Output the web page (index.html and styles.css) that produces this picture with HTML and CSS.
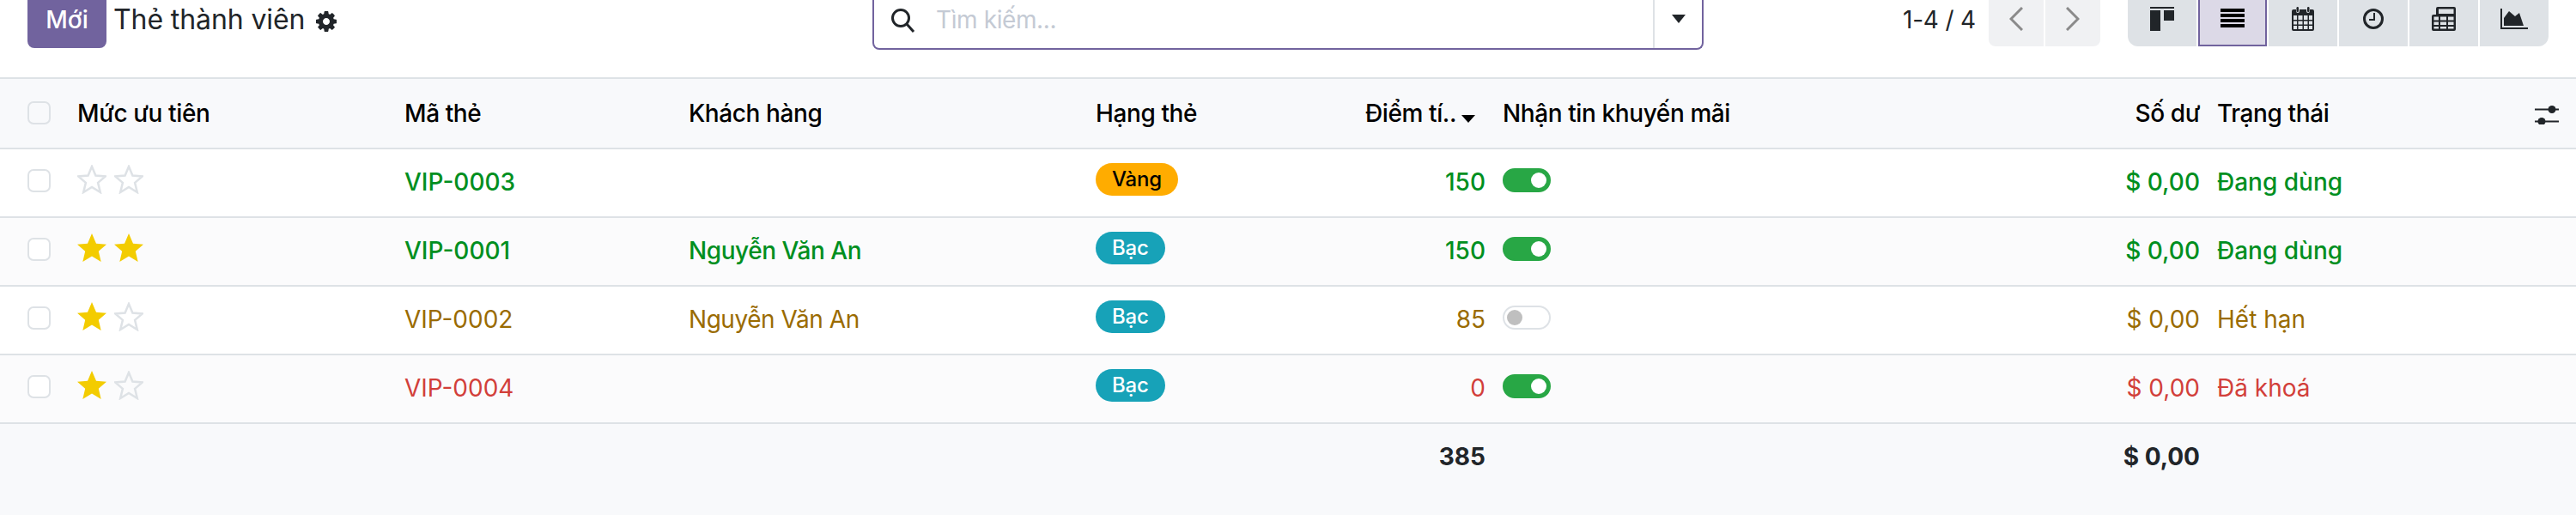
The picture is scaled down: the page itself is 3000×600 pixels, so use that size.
FILE: index.html
```html
<!DOCTYPE html>
<html lang="vi">
<head>
<meta charset="utf-8">
<title>Thẻ thành viên</title>
<link rel="stylesheet" href="styles.css">
</head>
<body>
<header class="toolbar">
  <div class="tb-left">
    <button class="btn-new">Mới</button>
    <span class="page-title">Thẻ thành viên</span>
    <svg class="gear" viewBox="128 128 1536 1536"><path d="M1152 896q0-106-75-181t-181-75-181 75-75 181 75 181 181 75 181-75 75-181zm512-109v222q0 12-8 23t-20 13l-185 28q-19 54-39 91 35 50 107 138 10 12 10 25t-9 23q-27 37-99 108t-94 71q-12 0-26-9l-138-108q-44 23-91 38-16 136-29 186-7 28-36 28h-222q-14 0-24.5-8.5t-11.5-21.5l-28-184q-49-16-90-37l-141 107q-10 9-25 9-14 0-25-11-126-114-165-168-7-10-7-23 0-12 8-23 15-21 51-66.5t54-70.5q-27-50-41-99l-183-27q-13-2-21-12.5t-8-23.5v-222q0-12 8-23t19-13l186-28q14-46 39-92-40-57-107-138-10-12-10-24 0-10 9-23 26-36 98.5-107.5t94.5-71.5q13 0 26 10l138 107q44-23 91-38 16-136 29-186 7-28 36-28h222q14 0 24.5 8.5t11.5 21.5l28 184q49 16 90 37l142-107q9-9 24-9 13 0 25 10 129 119 165 170 7 8 7 22 0 12-8 23-15 21-51 66.5t-54 70.5q26 50 41 98l183 28q13 2 21 12.5t8 23.5z"/></svg>
  </div>
  <div class="search">
    <svg class="search-icon" viewBox="0 0 29 28"><circle cx="12" cy="11" r="9.5"/><path d="M19 18l8 9"/></svg>
    <span class="search-ph">Tìm kiếm...</span>
    <span class="search-drop"><span class="caret caret-search"></span></span>
  </div>
  <div class="tb-right">
    <span class="pager-text">1-4 / 4</span>
    <div class="pager">
      <span class="pg-btn"><svg class="chev" viewBox="0 0 16 28"><path d="M15 1L2 14l13 13"/></svg></span>
      <span class="pg-btn"><svg class="chev" viewBox="0 0 16 28"><path d="M1 1l13 13L1 27"/></svg></span>
    </div>
    <div class="views">
      <span class="vw"><svg class="vi" viewBox="0 0 28 28"><path d="M0 0h28v2H0zM0 4h12v24H0zM16 4h12v12H16z"/></svg></span>
      <span class="vw active"><svg class="vi vi-black" viewBox="0 0 28 28"><path d="M0 2h28v4H0zM0 8h28v4H0zM0 14h28v4H0zM0 20h28v4H0z"/></svg></span>
      <span class="vw"><svg class="vi" viewBox="0 0 28 28"><path fill-rule="evenodd" d="M3 3h3v2a2 2 0 0 0 4 0V3h8v2a2 2 0 0 0 4 0V3h3a2 2 0 0 1 2 2v21a2 2 0 0 1-2 2H3a2 2 0 0 1-2-2V5a2 2 0 0 1 2-2zM3 10v5h4v-5zM8.500 10v5h5v-5zM15 10v5h4.500v-5zM21 10v5h4v-5zM3 16.500v4h4v-4zM8.500 16.500v4h5v-4zM15 16.500v4h4.500v-4zM21 16.500v4h4v-4zM3 22v4h4v-4zM8.500 22v4h5v-4zM15 22v4h4.500v-4zM21 22v4h4v-4z"/><rect x="6.500" width="2.500" height="6" rx="1.200"/><rect x="19" width="2.500" height="6" rx="1.200"/></svg></span>
      <span class="vw"><svg class="vi" viewBox="0 0 28 28"><circle cx="14" cy="14" r="10.500" fill="none" stroke="#212529" stroke-width="3"/><path d="M14 7h2v9H9v-2h5z"/></svg></span>
      <span class="vw"><svg class="vi" viewBox="0 0 28 28"><path fill-rule="evenodd" d="M7 0h19a2 2 0 0 1 2 2v24a2 2 0 0 1-2 2H2a2 2 0 0 1-2-2V11a2 2 0 0 1 2-2h3V2a2 2 0 0 1 2-2zM8 2.500V8h17.500V2.500zM2.500 11.500v4H8v-4zM10 11.500v4h7v-4zM19 11.500v4h6.500v-4zM2.500 17.500v3.500H8v-3.500zM10 17.500v3.500h7v-3.500zM19 17.500v3.500h6.500v-3.500zM2.500 23v2.500H8V23zM10 23v2.500h7V23zM19 23v2.500h6.500V23z"/></svg></span>
      <span class="vw"><svg class="vi vi-chart" viewBox="0 0 32 24"><path d="M0 0h2v22h30v2H0z"/><path d="M4 20V11l6-8 7 6 5-4 5 15z"/></svg></span>
    </div>
  </div>
</header>

<table class="list">
  <colgroup>
    <col class="c-check"><col class="c-prio"><col class="c-code"><col class="c-cust"><col class="c-tier"><col class="c-points"><col class="c-promo"><col class="c-bal"><col class="c-state"><col class="c-opt">
  </colgroup>
  <thead>
    <tr>
      <th><span class="check check-h"></span></th>
      <th>Mức ưu tiên</th>
      <th>Mã thẻ</th>
      <th>Khách hàng</th>
      <th>Hạng thẻ</th>
      <th class="num"><span class="sorted">Điểm tí..<span class="caret caret-sort"></span></span></th>
      <th>Nhận tin khuyến mãi</th>
      <th class="num clip">Số dư</th>
      <th>Trạng thái</th>
      <th class="opt"><svg class="sliders" viewBox="0 0 28 22"><path d="M0 3.500h28v2H0zM0 17.500h28v2H0z"/><circle cx="20" cy="4.500" r="4.500"/><circle cx="8" cy="18.500" r="4.500"/></svg></th>
    </tr>
  </thead>
  <tbody>
    <tr class="ok">
      <td><span class="check"></span></td>
      <td><div class="stars"><svg class="star off" viewBox="0 0 34 34"><path d="M17 2l4.400 10.600 11.400.9-8.700 7.400 2.700 11.100L17 26l-9.800 6 2.700-11.100-8.700-7.400 11.400-.9z"/></svg><svg class="star off" viewBox="0 0 34 34"><path d="M17 2l4.400 10.600 11.400.9-8.700 7.400 2.700 11.100L17 26l-9.800 6 2.700-11.100-8.700-7.400 11.400-.9z"/></svg></div></td>
      <td class="strong">VIP-0003</td>
      <td class="strong name"></td>
      <td><span class="badge gold">Vàng</span></td>
      <td class="num strong">150</td>
      <td><span class="switch on"></span></td>
      <td class="num strong">$ 0,00</td>
      <td class="strong">Đang dùng</td>
      <td></td>
    </tr>
    <tr class="ok">
      <td><span class="check"></span></td>
      <td><div class="stars"><svg class="star" viewBox="0 0 34 34"><path d="M17 0l5 11.800 12 1-9.200 7.900 2.900 12.300L17 26.500 6.300 33l2.900-12.300L0 12.800l12-1z"/></svg><svg class="star" viewBox="0 0 34 34"><path d="M17 0l5 11.800 12 1-9.200 7.900 2.900 12.300L17 26.500 6.300 33l2.900-12.300L0 12.800l12-1z"/></svg></div></td>
      <td class="strong">VIP-0001</td>
      <td class="strong name">Nguyễn Văn An</td>
      <td><span class="badge silver">Bạc</span></td>
      <td class="num strong">150</td>
      <td><span class="switch on"></span></td>
      <td class="num strong">$ 0,00</td>
      <td class="strong">Đang dùng</td>
      <td></td>
    </tr>
    <tr class="warn">
      <td><span class="check"></span></td>
      <td><div class="stars"><svg class="star" viewBox="0 0 34 34"><path d="M17 0l5 11.800 12 1-9.200 7.900 2.900 12.300L17 26.500 6.300 33l2.900-12.300L0 12.800l12-1z"/></svg><svg class="star off" viewBox="0 0 34 34"><path d="M17 2l4.400 10.600 11.400.9-8.700 7.400 2.700 11.100L17 26l-9.800 6 2.700-11.100-8.700-7.400 11.400-.9z"/></svg></div></td>
      <td>VIP-0002</td>
      <td class="name">Nguyễn Văn An</td>
      <td><span class="badge silver">Bạc</span></td>
      <td class="num">85</td>
      <td><span class="switch"></span></td>
      <td class="num">$ 0,00</td>
      <td>Hết hạn</td>
      <td></td>
    </tr>
    <tr class="bad">
      <td><span class="check"></span></td>
      <td><div class="stars"><svg class="star" viewBox="0 0 34 34"><path d="M17 0l5 11.800 12 1-9.200 7.900 2.900 12.300L17 26.500 6.300 33l2.900-12.300L0 12.800l12-1z"/></svg><svg class="star off" viewBox="0 0 34 34"><path d="M17 2l4.400 10.600 11.400.9-8.700 7.400 2.700 11.100L17 26l-9.800 6 2.700-11.100-8.700-7.400 11.400-.9z"/></svg></div></td>
      <td>VIP-0004</td>
      <td class="name"></td>
      <td><span class="badge silver">Bạc</span></td>
      <td class="num">0</td>
      <td><span class="switch on"></span></td>
      <td class="num">$ 0,00</td>
      <td>Đã khoá</td>
      <td></td>
    </tr>
  </tbody>
  <tfoot>
    <tr>
      <td></td><td></td><td></td><td></td><td></td>
      <td class="num">385</td>
      <td></td>
      <td class="num">$ 0,00</td>
      <td></td><td></td>
    </tr>
  </tfoot>
</table>
</body>
</html>
```
FILE: styles.css
```css
* { box-sizing: border-box; }
html, body { margin: 0; height: 600px; overflow: hidden; }
body { background: #f8f9fb; color: #212529; font-family: Inter, "Liberation Sans", sans-serif; font-size: 28px; }

.toolbar { display: grid; grid-template-columns: 1016px 968px 1fr; height: 100px; margin-top: -10px; background: #fff; align-items: start; }
.tb-left { display: flex; align-items: flex-start; padding-left: 32px; }
.btn-new { width: 92px; height: 66px; border: 0; border-radius: 0 0 8px 8px; background: #71639e; color: #fff; font: 500 28px Inter, sans-serif; padding: 0; }
.page-title { margin-left: 8px; font-size: 32px; line-height: 66px; letter-spacing: -0.1px; }
.gear { width: 24px; height: 24px; margin: 23px 0 0 13px; fill: #212529; }

.search { display: flex; height: 68px; border: 2px solid #71639e; border-top: 0; border-radius: 0 0 8px 8px; background: #fff; }
.search-icon { width: 29px; height: 28px; margin: 20px 0 0 19px; fill: none; stroke: #212529; stroke-width: 3; }
.search-ph { margin-left: 24px; color: #c4cad4; line-height: 66px; letter-spacing: -0.4px; }
.search-drop { display: flex; justify-content: center; width: 57px; margin-left: auto; border-left: 2px solid #dee2e6; padding-top: 27px; }
.caret { display: block; width: 0; height: 0; border-style: solid; border-color: transparent; border-width: 10px 8.500px 0; }
.caret-search { border-top-color: #212529; }
.caret-sort { margin: 22px 12px 0 6px; border-top-color: #000; border-width: 9px 8.500px 0; }

.tb-right { display: flex; align-items: flex-start; padding-left: 232px; }
.pager-text { width: 100px; line-height: 66px; white-space: nowrap; letter-spacing: -0.2px; }
.pager { display: flex; gap: 2px; overflow: hidden; border-radius: 0 0 8px 8px; }
.pg-btn { display: flex; justify-content: center; width: 64px; height: 64px; background: #f0f1f3; padding-top: 18px; }
.chev { width: 16px; height: 28px; fill: none; stroke: #8a8a8a; stroke-width: 3; }
.views { display: flex; gap: 2px; margin-left: 32px; overflow: hidden; border-radius: 0 0 12px 12px; }
.vw { display: flex; justify-content: center; width: 80px; height: 64px; background: #dee2e6; padding-top: 18px; }
.vw.active { background: #dcd9e7; border: 2px solid #71639e; padding-top: 16px; }
.vi { width: 28px; height: 28px; fill: #212529; }
.vi-black { fill: #000; }
.vi-chart { width: 32px; height: 24px; margin-top: 2px; }

.list { width: 3000px; table-layout: fixed; border-collapse: separate; border-spacing: 0; }
.c-check { width: 79px; } .c-prio { width: 381px; } .c-code { width: 331px; } .c-cust { width: 474px; } .c-tier { width: 275px; }
.c-points { width: 198px; } .c-promo { width: 642px; } .c-bal { width: 190px; } .c-state { width: 360px; } .c-opt { width: 70px; }

th, td { padding: 18px 8px 20px 12px; line-height: 40px; text-align: left; vertical-align: top; white-space: nowrap; }
th:first-child, td:first-child { padding-left: 32px; padding-right: 0; }
th { height: 84px; padding-top: 20px; padding-bottom: 20px; font-weight: 500; color: #000; letter-spacing: -0.4px; background: #f8f9fb; border-top: 2px solid #dee2e6; border-bottom: 2px solid #dee2e6; }
th:nth-child(n+2):nth-child(-n+5), td:nth-child(n+2):nth-child(-n+5) { padding-left: 11px; }
tbody td { height: 80px; border-bottom: 2px solid #dee2e6; }
tbody tr:nth-child(odd) td { background: #fff; }
tbody tr:nth-child(even) td { background: #fbfbfc; }
tfoot td { font-weight: 700; }
.num { text-align: right; }
.clip { overflow: hidden; }
.sorted { display: flex; justify-content: flex-end; }
.opt { padding: 0; }
.sliders { display: block; width: 28px; height: 22px; margin: 31px 0 0 22px; fill: #212529; }

.ok td { color: #008f1f; }
.warn td { color: #9a6b01; }
.bad td { color: #d23f3a; }
.strong { font-weight: 500; }
.name { letter-spacing: -0.45px; }

.check { display: block; width: 27px; height: 27px; margin-top: 5px; border: 2px solid #dee2e6; border-radius: 7px; background: #fff; }
th .check { margin-top: 6px; background: #f8f9fb; }
.stars { display: flex; gap: 9px; }
.star { width: 34px; height: 34px; fill: #f3cc00; }
.star.off { fill: none; stroke: #dee2e6; stroke-width: 2.500; }
.badge { display: block; width: max-content; height: 38px; margin-top: -2px; padding: 0 19px; border-radius: 19px; font-size: 24px; font-weight: 500; line-height: 38px; letter-spacing: -0.2px; }
.gold { background: #ffac00; color: #000; }
.silver { background: #17a2b8; color: #fff; }
.switch { display: block; position: relative; width: 56px; height: 28px; margin-top: 4px; border: 2px solid #dee2e6; border-radius: 14px; background: #fff; }
.switch::after { content: ""; position: absolute; top: 3px; left: 3px; width: 18px; height: 18px; border-radius: 50%; background: #bfbfbf; }
.switch.on { border-color: #28a745; background: #28a745; }
.switch.on::after { left: auto; right: 3px; background: #fff; }
```
